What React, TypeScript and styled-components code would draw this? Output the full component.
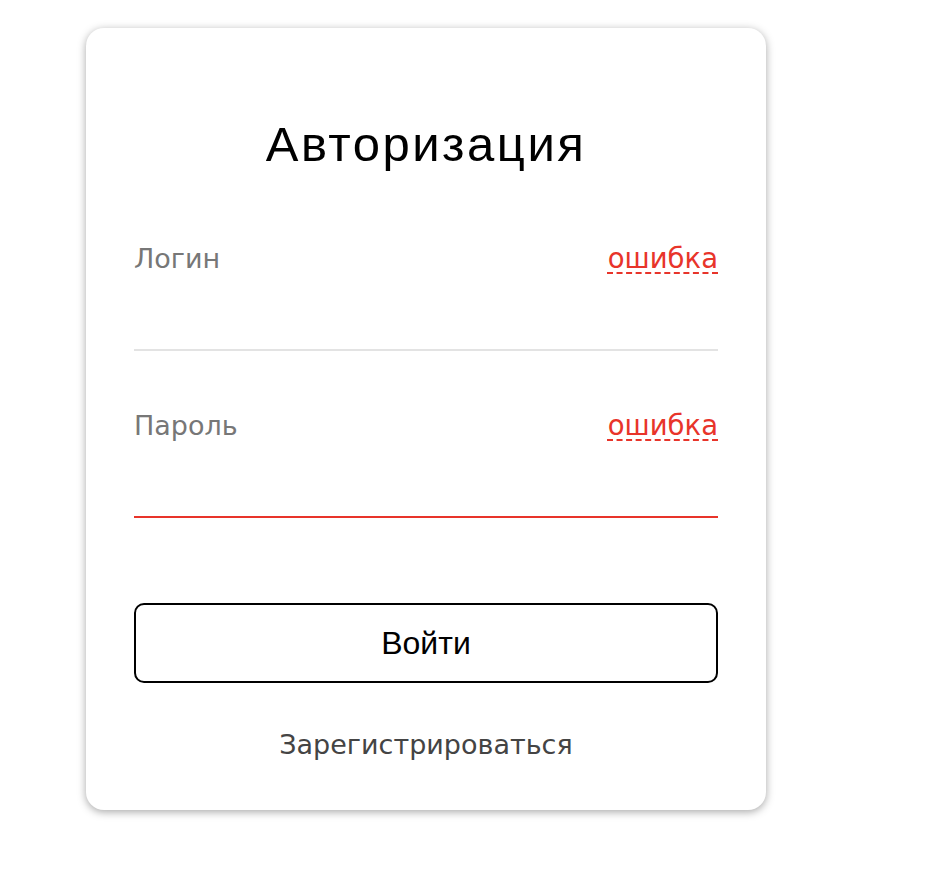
import React from "react";
import styled, { createGlobalStyle } from "styled-components";

const Global = createGlobalStyle`
  html, body { margin: 0; padding: 0; background: #fff; }
  body { font-family: "DejaVu Sans", Verdana, sans-serif; }
`;

const Page = styled.div`
  padding: 28px 0 40px 86px;
`;

const Card = styled.form`
  box-sizing: border-box;
  width: 680px;
  height: 782px;
  background: #fff;
  border-radius: 18px;
  box-shadow: 0 2px 8px rgba(0, 0, 0, 0.35);
  padding: 88px 48px 0;
  display: flex;
  flex-direction: column;
`;

const Title = styled.h1`
  margin: 0;
  text-align: center;
  font-family: "Liberation Sans", Arial, sans-serif;
  font-weight: 400;
  font-size: 49px;
  letter-spacing: 2.5px;
  line-height: 56px;
  color: #000;
`;

const Field = styled.div<{ $first?: boolean }>`
  margin-top: ${(p) => (p.$first ? "70px" : "58px")};
  display: flex;
  flex-direction: column;
`;

const LabelRow = styled.div`
  display: flex;
  justify-content: space-between;
  align-items: baseline;
`;

const Label = styled.label`
  font-size: 27px;
  line-height: 32px;
  color: #777;
`;

const ErrorText = styled.span`
  font-size: 27.5px;
  line-height: 32px;
  color: #e8342a;
  text-decoration: underline dashed #e8342a;
  text-underline-offset: 4px;
  text-decoration-thickness: 2px;
`;

const Input = styled.input<{ $error?: boolean }>`
  box-sizing: border-box;
  margin-top: 32px;
  border: none;
  border-bottom: 2px solid ${(p) => (p.$error ? "#e8342a" : "#e3e3e3")};
  height: 44px;
  padding: 0;
  outline: none;
  font-size: 24px;
  font-family: inherit;
  background: transparent;
`;

const Button = styled.button`
  margin-top: 85px;
  height: 80px;
  border: 2px solid #000;
  border-radius: 10px;
  background: #fff;
  font-family: "Liberation Sans", Arial, sans-serif;
  font-size: 32px;
  color: #000;
  cursor: pointer;
`;

const Register = styled.a`
  margin-top: 46px;
  text-align: center;
  font-size: 27px;
  line-height: 32px;
  color: #444;
  text-decoration: none;
`;

export default function App() {
  return (
    <>
      <Global />
      <Page>
        <Card onSubmit={(e) => e.preventDefault()}>
          <Title>Авторизация</Title>
          <Field $first>
            <LabelRow>
              <Label>Логин</Label>
              <ErrorText>ошибка</ErrorText>
            </LabelRow>
            <Input />
          </Field>
          <Field>
            <LabelRow>
              <Label>Пароль</Label>
              <ErrorText>ошибка</ErrorText>
            </LabelRow>
            <Input type="password" $error />
          </Field>
          <Button type="submit">Войти</Button>
          <Register href="#">Зарегистрироваться</Register>
        </Card>
      </Page>
    </>
  );
}
